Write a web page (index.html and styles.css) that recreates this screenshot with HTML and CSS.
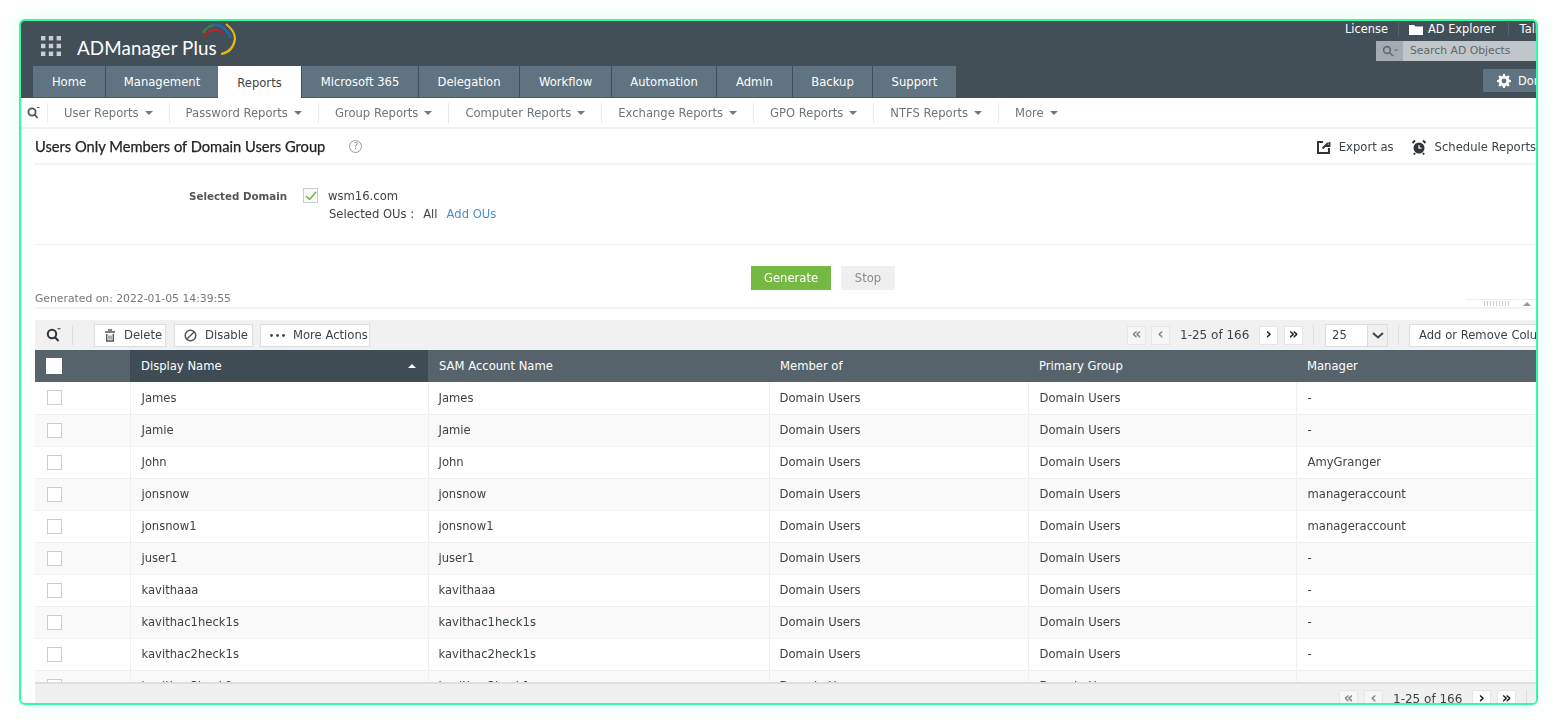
FILE: index.html
```html
<!DOCTYPE html>
<html lang="en">
<head>
<meta charset="utf-8">
<title>ADManager Plus</title>
<link rel="stylesheet" href="styles.css">
</head>
<body>
<div class="frame">
<div class="inner">
  <header class="header">
    <div class="head-left">
      <div class="brand">
        <svg class="apps" width="20" height="20" viewBox="0 0 20 20" fill="#c9ced1"><rect x="0" y="0" width="4.4" height="4.4"/><rect x="7.8" y="0" width="4.4" height="4.4"/><rect x="15.6" y="0" width="4.4" height="4.4"/><rect x="0" y="7.8" width="4.4" height="4.4"/><rect x="7.8" y="7.8" width="4.4" height="4.4"/><rect x="15.6" y="7.8" width="4.4" height="4.4"/><rect x="0" y="15.6" width="4.4" height="4.4"/><rect x="7.8" y="15.6" width="4.4" height="4.4"/><rect x="15.6" y="15.6" width="4.4" height="4.4"/></svg>
        <span class="logo">ADManager Plus</span>
        <svg class="swoosh" width="36" height="34" viewBox="0 0 36 34" fill="none"><path d="M2 15.500Q11 3 23 11" stroke="#b5232e" stroke-width="2"/><path d="M11 3.500Q22 0 30 16" stroke="#2567ae" stroke-width="2.400"/><path d="M2 11Q5 5 12 3" stroke="#2e8b3d" stroke-width="2.200"/><path d="M25 2Q34 9 34 17Q32 30 20 32" stroke="#e8b90c" stroke-width="2.200"/></svg>
      </div>
      <nav class="tabs">
        <a class="tab tab-home">Home</a>
        <a class="tab tab-mgmt">Management</a>
        <a class="tab tab-active tab-rep">Reports</a>
        <a class="tab tab-ms">Microsoft 365</a>
        <a class="tab tab-del">Delegation</a>
        <a class="tab tab-wf">Workflow</a>
        <a class="tab tab-auto">Automation</a>
        <a class="tab tab-adm">Admin</a>
        <a class="tab tab-bak">Backup</a>
        <a class="tab tab-sup">Support</a>
      </nav>
    </div>
    <div class="head-right">
      <div class="toplinks">
        <span>License</span><i class="vsep"></i>
        <svg class="noshrink" width="14" height="11" viewBox="0 0 14 11" fill="#fff"><path d="M0 1h5l1.500 1.500H14V11H0z"/></svg>
        <span>AD Explorer</span><i class="vsep vsep-last"></i>
        <span>Talk</span>
      </div>
      <div class="adsearch">
        <span class="adsearch-ico"><svg width="16" height="12" viewBox="0 0 16 12" fill="none" stroke="#5e6a71" stroke-width="1.600"><circle cx="5" cy="5" r="3.400"/><path d="M7.500 7.500L11 11"/><path d="M12.500 5h3" stroke-width="1.200"/></svg></span>
        <span class="adsearch-text">Search AD Objects</span>
      </div>
      <div class="dombtn">
        <svg class="noshrink" width="14" height="14" viewBox="0 0 14 14" fill="#fff"><path fill-rule="evenodd" d="M6 0h2l.3 1.800 1.400.6L11.200 1.300l1.500 1.500-1.100 1.500.6 1.400L14 6v2l-1.800.3-.6 1.400 1.100 1.500-1.500 1.500-1.500-1.100-1.400.6L8 14H6l-.3-1.800-1.400-.6-1.500 1.100-1.500-1.500 1.100-1.500-.6-1.400L0 8V6l1.800-.3.6-1.400-1.100-1.500 1.500-1.500 1.500 1.100 1.400-.6zM7 4.600a2.400 2.400 0 100 4.800 2.400 2.400 0 000-4.800z"/></svg>
        <span>Domain</span>
      </div>
    </div>
  </header>

  <nav class="subnav">
    <span class="sub-search"><svg width="13" height="13" viewBox="0 0 13 13" fill="none" stroke="#4d555a" stroke-width="1.800"><circle cx="5" cy="6" r="3.600"/><path d="M7.500 8.500L10.500 12"/><path d="M10 1.500h2.500" stroke-width="1"/></svg></span>
    <a class="sub-item">User Reports<i class="caret"></i></a>
    <a class="sub-item">Password Reports<i class="caret"></i></a>
    <a class="sub-item">Group Reports<i class="caret"></i></a>
    <a class="sub-item">Computer Reports<i class="caret"></i></a>
    <a class="sub-item">Exchange Reports<i class="caret"></i></a>
    <a class="sub-item">GPO Reports<i class="caret"></i></a>
    <a class="sub-item">NTFS Reports<i class="caret"></i></a>
    <a class="sub-item sub-last">More<i class="caret"></i></a>
  </nav>

  <main class="content">
    <div class="titlebar">
      <h1 class="title">Users Only Members of Domain Users Group</h1>
      <span class="help">?</span>
      <div class="title-actions">
        <span class="action"><svg class="noshrink" width="14" height="14" viewBox="0 0 14 14" fill="none" stroke="#2f3538" stroke-width="2"><path d="M6 2H1v11h11V8"/><path d="M5.500 8.500L11 3M7.500 6h5V2" stroke-width="1.800"/></svg>Export as</span>
        <span class="action"><svg class="noshrink" width="16" height="16" viewBox="0 0 16 16"><circle cx="8" cy="9" r="5.500" fill="#2f3538"/><path d="M1.500 4L4 1.500M14.500 4L12 1.500M4 14l-1 1.500M12 14l1 1.500" stroke="#2f3538" stroke-width="2"/><path d="M8 6v3.200h2.500" fill="none" stroke="#fff" stroke-width="1.200"/></svg>Schedule Reports</span>
      </div>
    </div>

    <section class="domain">
      <div class="domain-label">Selected Domain</div>
      <span class="check-on"><svg width="12" height="10" viewBox="0 0 12 10" fill="none" stroke="#6ab344" stroke-width="1.500"><path d="M1 5l3.500 3.500L11 1"/></svg></span>
      <div class="domain-info">
        <div class="domain-name">wsm16.com</div>
        <div class="domain-ous">Selected OUs :<span class="ou-all">All</span><a class="ou-add">Add OUs</a></div>
      </div>
    </section>

    <section class="gen">
      <div class="gen-buttons">
        <span class="btn-gen">Generate</span>
        <span class="btn-stop">Stop</span>
      </div>
      <div class="gen-on">Generated on: 2022-01-05 14:39:55</div>
      <div class="collapse"><i class="grip"></i><i class="up"></i></div>
    </section>

    <div class="toolbar">
      <span class="tb-search"><svg width="16" height="15" viewBox="0 0 16 15" fill="none" stroke="#2f3538" stroke-width="2"><circle cx="6" cy="7" r="4.200"/><path d="M9 10.200L12.500 14"/><path d="M11.500 1.800h3" stroke-width="1"/></svg></span>
      <i class="tb-sep"></i>
      <span class="tb-btn tb-del"><svg width="12" height="13" viewBox="0 0 12 13" fill="none" stroke="#555" stroke-width="1.400"><path d="M1 3h10M4 1h4M2.700 5v7h6.600V5"/><path d="M5 6.500v4M7 6.500v4" stroke-width="1"/></svg>Delete</span>
      <span class="tb-btn tb-dis"><svg width="13" height="13" viewBox="0 0 13 13" fill="none" stroke="#555" stroke-width="1.500"><circle cx="6.500" cy="6.500" r="5.300"/><path d="M3 10L10 3"/></svg>Disable</span>
      <span class="tb-btn tb-more"><svg width="15" height="3" viewBox="0 0 15 3" fill="#444"><circle cx="1.500" cy="1.500" r="1.400"/><circle cx="7.500" cy="1.500" r="1.400"/><circle cx="13.500" cy="1.500" r="1.400"/></svg>More Actions</span>
      <div class="pager">
        <span class="pg pg-off pg-a">«</span>
        <span class="pg pg-off pg-b">‹</span>
        <span class="pg-text">1-25 of 166</span>
        <span class="pg pg-on pg-c">›</span>
        <span class="pg pg-on pg-d">»</span>
        <i class="tb-sep sep-a"></i>
        <span class="select"><span class="select-val">25</span><span class="select-arrow"><svg width="12" height="7" viewBox="0 0 12 7" fill="none" stroke="#3b4348" stroke-width="2"><path d="M1 1l5 4.500L11 1"/></svg></span></span>
        <i class="tb-sep sep-b"></i>
        <span class="tb-btn tb-cols">Add or Remove Columns</span>
      </div>
    </div>

    <div class="tablewrap">
      <table class="grid">
        <colgroup><col class="c0"><col class="c1"><col class="c2"><col class="c3"><col class="c4"><col class="c5"></colgroup>
        <thead>
          <tr>
            <th class="th-check"><span class="cb cb-head"></span></th>
            <th class="th-sorted">Display Name<i class="sort-up"></i></th>
            <th>SAM Account Name</th><th>Member of</th><th>Primary Group</th><th>Manager</th>
          </tr>
        </thead>
        <tbody>
          <tr><td><span class="cb"></span></td><td>James</td><td>James</td><td>Domain Users</td><td>Domain Users</td><td>-</td></tr>
          <tr><td><span class="cb"></span></td><td>Jamie</td><td>Jamie</td><td>Domain Users</td><td>Domain Users</td><td>-</td></tr>
          <tr><td><span class="cb"></span></td><td>John</td><td>John</td><td>Domain Users</td><td>Domain Users</td><td>AmyGranger</td></tr>
          <tr><td><span class="cb"></span></td><td>jonsnow</td><td>jonsnow</td><td>Domain Users</td><td>Domain Users</td><td>manageraccount</td></tr>
          <tr><td><span class="cb"></span></td><td>jonsnow1</td><td>jonsnow1</td><td>Domain Users</td><td>Domain Users</td><td>manageraccount</td></tr>
          <tr><td><span class="cb"></span></td><td>juser1</td><td>juser1</td><td>Domain Users</td><td>Domain Users</td><td>-</td></tr>
          <tr><td><span class="cb"></span></td><td>kavithaaa</td><td>kavithaaa</td><td>Domain Users</td><td>Domain Users</td><td>-</td></tr>
          <tr><td><span class="cb"></span></td><td>kavithac1heck1s</td><td>kavithac1heck1s</td><td>Domain Users</td><td>Domain Users</td><td>-</td></tr>
          <tr><td><span class="cb"></span></td><td>kavithac2heck1s</td><td>kavithac2heck1s</td><td>Domain Users</td><td>Domain Users</td><td>-</td></tr>
          <tr><td><span class="cb"></span></td><td>kavithac3heck1s</td><td>kavithac3heck1s</td><td>Domain Users</td><td>Domain Users</td><td>-</td></tr>
        </tbody>
      </table>
    </div>

    <div class="footer">
      <span class="pg pg-off pg-e">«</span>
      <span class="pg pg-off pg-f">‹</span>
      <span class="pg-text pg-text2">1-25 of 166</span>
      <span class="pg pg-on pg-g">›</span>
      <span class="pg pg-on pg-h">»</span>
      <i class="tb-sep sep-c"></i>
    </div>
  </main>
</div>
</div>
</body>
</html>
```
FILE: styles.css
```css
* { box-sizing: border-box; }
html, body { margin: 0; height: 100%; background: #fff; overflow: hidden; }
body { font-family: "DejaVu Sans", Verdana, sans-serif; font-size: 11.6px; color: #3c4347; }
.noshrink { flex: none; }
.frame {
  position: absolute; left: 19px; top: 19px; width: 1519px; height: 686px;
  border: 2px solid #2efc9f; border-radius: 6px; overflow: hidden; background: #fff;
  box-shadow: 0 0 22px rgba(46, 252, 159, .13);
}
.inner { width: 1515px; height: 682px; display: flex; flex-direction: column; filter: blur(.35px); }

.header { height: 77px; flex: none; background: #434f57; display: flex; justify-content: space-between; overflow: hidden; }
.head-left { padding-left: 12px; display: flex; flex-direction: column; }
.brand { height: 45px; position: relative; display: flex; align-items: center; padding-left: 8px; }
.apps { margin-top: 5px; }
.logo { font-family: "Lato", "Open Sans", sans-serif; font-size: 18.8px; color: #fff; margin-left: 16px; margin-top: 7px; letter-spacing: .1px; white-space: nowrap; }
.swoosh { position: absolute; left: 168px; top: 1px; }
.tabs { display: flex; height: 32px; }
.tab { display: flex; align-items: center; justify-content: center; background: #5f7380; color: #fff; margin-right: 1px; border-bottom: 1px solid #4a5a64; }
.tab-active { background: #fff; color: #444; border-bottom: 0; height: 33px; }
.tab-home { width: 72px; } .tab-mgmt { width: 112px; margin-right: 0; } .tab-rep { width: 83px; }
.tab-ms { width: 116px; } .tab-del { width: 100px; } .tab-wf { width: 91px; } .tab-auto { width: 104px; }
.tab-adm { width: 75px; } .tab-bak { width: 79px; } .tab-sup { width: 83px; }

.head-right { width: 192px; flex: none; display: flex; flex-direction: column; overflow: hidden; }
.toplinks { height: 18px; display: flex; align-items: center; color: #fff; white-space: nowrap; gap: 5px; margin-top: -1px; padding-left: 1px; font-size: 11.4px; }
.vsep { width: 1px; height: 14px; background: #55626a; margin: 0 5px; flex: none; }
.vsep-last { margin-left: 7px; margin-right: 6px; }
.adsearch { margin: 3px 0 0 32px; height: 20px; flex: none; display: flex; background: #c0c6ca; width: 170px; }
.adsearch-ico { width: 27px; background: #a4acb1; display: flex; align-items: center; justify-content: center; }
.adsearch-text { padding-left: 7px; font-size: 10.8px; line-height: 20px; color: #5f676c; white-space: nowrap; }
.dombtn { margin: 8px 0 0 139px; height: 23px; width: 70px; flex: none; background: #5f7380; display: flex; align-items: center; gap: 7px; padding-left: 14px; color: #fff; font-size: 11.4px; white-space: nowrap; }

.subnav { height: 31px; flex: none; display: flex; align-items: center; border-bottom: 2px solid #f2f2f2; color: #6e767b; padding-left: 6px; white-space: nowrap; }
.sub-search { width: 21px; height: 20px; flex: none; display: flex; align-items: center; border-right: 1px solid #eee; }
.sub-item { display: flex; align-items: center; height: 20px; padding: 0 16px; border-right: 1px solid #e8e8e8; }
.sub-last { border-right: 0; }
.caret { width: 0; height: 0; border: 4px solid transparent; border-top: 4px solid #777; border-bottom: 0; margin-left: 6px; }

.content { padding-left: 13px; flex: 1; min-height: 0; display: flex; flex-direction: column; }
.titlebar { height: 36px; flex: none; display: flex; align-items: center; border-bottom: 2px solid #f2f2f2; padding-left: 1px; }
.title { margin: 0; font-family: "Lato", "Open Sans", sans-serif; font-size: 14.7px; font-weight: 400; -webkit-text-stroke: .25px #222; color: #222; white-space: nowrap; }
.help { width: 13px; height: 13px; border: 1px solid #999; border-radius: 50%; margin-left: 24px; font-size: 9px; line-height: 11px; text-align: center; color: #888; }
.title-actions { margin: 1px 0 0 auto; display: flex; gap: 17px; white-space: nowrap; color: #3c4347; }
.action { display: flex; align-items: center; gap: 8px; }

.domain { height: 80px; flex: none; display: flex; border-bottom: 1px solid #f2f2f2; padding: 23px 0 0 155px; }
.domain-label { font-size: 10.3px; font-weight: 700; color: #555; width: 114px; margin-top: 2px; white-space: nowrap; }
.check-on { width: 15px; height: 15px; border: 1px solid #ccc; display: flex; align-items: center; justify-content: center; background: #fafafa; }
.domain-info { margin-left: 10px; }
.domain-name { line-height: 16px; color: #3c4347; }
.domain-ous { line-height: 18px; margin: 1px 0 0 1px; }
.ou-all { margin-left: 9px; }
.ou-add { margin-left: 9px; color: #4a90c8; }

.gen { height: 64px; flex: none; position: relative; border-bottom: 2px solid #f4f4f4; margin-left: 1px; }
.gen-buttons { display: flex; gap: 10px; padding: 21px 0 0 716px; }
.btn-gen { width: 80px; height: 24px; background: #75b843; color: #fff; text-align: center; line-height: 24px; }
.btn-stop { width: 54px; height: 24px; background: #efefef; color: #8a8a8a; text-align: center; line-height: 24px; }
.gen-on { position: absolute; left: 0; top: 47px; font-size: 10.8px; color: #777; white-space: nowrap; }
.collapse { position: absolute; right: 0; top: 54px; width: 70px; height: 8px; border-top: 1px solid #eee; display: flex; align-items: center; gap: 14px; padding-left: 18px; }
.grip { width: 25px; height: 5px; background: repeating-linear-gradient(90deg, #ccc 0 1px, #fff 1px 3px); }
.up { width: 0; height: 0; border: 4px solid transparent; border-bottom: 4px solid #999; border-top: 0; }

.toolbar { height: 30px; margin: 11px 0 0 1px; flex: none; background: #f1f1f1; display: flex; align-items: center; padding-left: 11px; white-space: nowrap; }
.tb-search { width: 16px; height: 16px; display: flex; }
.tb-sep { width: 1px; height: 20px; background: #ddd; flex: none; }
.toolbar > .tb-sep { margin: 0 21px 0 10px; }
.tb-btn { height: 23px; background: #fff; border: 1px solid #ddd; display: flex; align-items: center; gap: 8px; padding-left: 9px; color: #3c4347; flex: none; }
.tb-del { width: 72px; } .tb-dis { width: 79px; margin-left: 8px; } .tb-more { width: 110px; margin-left: 7px; }
.pager { margin-left: auto; width: 409px; flex: none; display: flex; align-items: center; overflow: hidden; }
.pg { width: 19px; height: 19px; display: flex; align-items: center; justify-content: center; font-weight: 700; font-size: 15px; line-height: 1; padding-bottom: 2px; flex: none; }
.pg-off { background: #f6f6f6; border: 1px solid #e6e6e6; color: #888; }
.pg-on { background: #fff; border: 1px solid #e6e6e6; color: #222; }
.pg-b { margin-left: 5px; } .pg-d { margin-left: 6px; }
.pg-text { margin: 0 10px; width: 69px; white-space: nowrap; flex: none; color: #3c4347; font-size: 12px; }
.sep-a { margin: 0 11px 0 10px; } .sep-b { margin: 0 10px 0 10px; }
.select { width: 63px; height: 23px; display: flex; background: #fff; border: 1px solid #ddd; flex: none; }
.select-val { width: 41px; padding-left: 6px; line-height: 21px; }
.select-arrow { flex: 1; background: #f1f1f1; border-left: 1px solid #ddd; display: flex; align-items: center; justify-content: center; }
.tb-cols { padding-left: 9px; width: 140px; }

.tablewrap { height: 332px; flex: none; overflow: hidden; margin-left: 1px; }
.grid { border-collapse: collapse; table-layout: fixed; width: 1502px; }
.c0 { width: 95px; } .c1 { width: 298px; } .c2 { width: 341px; } .c3 { width: 259px; } .c4 { width: 268px; } .c5 { width: 241px; }
.grid th { height: 32px; background: #56636b; color: #fff; font-weight: 400; text-align: left; padding: 0 11px; position: relative; white-space: nowrap; }
.grid .th-sorted { background: #404c54; }
.grid td { height: 32px; padding: 0 11px; border-right: 1px solid #efefef; border-bottom: 1px solid #f0f0f0; white-space: nowrap; }
.grid td:nth-child(3), .grid td:nth-child(4) { padding-left: 10px; }
.grid tbody tr:nth-child(even) td { background: #f9f9f9; }
.th-check, .grid td:first-child { padding-left: 12px; }
.cb { display: block; width: 15px; height: 15px; border: 1px solid #ccc; background: #fff; }
.cb-head { border: 0; width: 16px; height: 16px; }
.sort-up { position: absolute; right: 12px; top: 14px; width: 0; height: 0; border: 4px solid transparent; border-bottom: 4px solid #fff; border-top: 0; }

.footer { flex: 1; background: #f0f0f0; border-top: 2px solid #dedede; display: flex; align-items: flex-start; padding: 6px 0 0 1304px; margin-left: 1px; overflow: hidden; }
.pg-f { margin-left: 6px; }
.pg-text2 { margin: 2px 10px 0 10px; }
.pg-h { margin-left: 6px; }
.sep-c { margin-left: 10px; }
```
